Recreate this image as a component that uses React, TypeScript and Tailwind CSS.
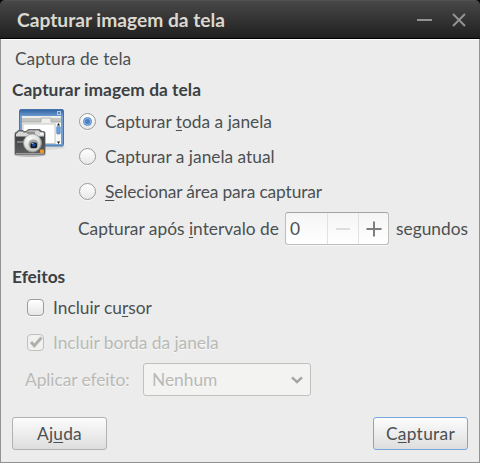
import type { ReactNode } from "react";

function ScreenshotIcon() {
  return (
    <svg width="52" height="50" viewBox="0 0 52 50" className="block">
      <defs>
        <linearGradient id="bar" x1="0" y1="0" x2="0" y2="1">
          <stop offset="0" stopColor="#3465a4" />
          <stop offset="1" stopColor="#6d99cf" />
        </linearGradient>
        <linearGradient id="body" x1="0" y1="0" x2="0" y2="1">
          <stop offset="0" stopColor="#77797a" />
          <stop offset="0.25" stopColor="#3c3e3f" />
          <stop offset="1" stopColor="#5d5f60" />
        </linearGradient>
        <radialGradient id="ring" cx="0.4" cy="0.35" r="0.7">
          <stop offset="0" stopColor="#ffffff" />
          <stop offset="0.65" stopColor="#dcddda" />
          <stop offset="1" stopColor="#9b9d99" />
        </radialGradient>
      </defs>
      <ellipse cx="30" cy="39" rx="22" ry="3" fill="#000" opacity="0.08" />
      <rect x="6.500" y="1.500" width="44" height="36.500" rx="1.500" fill="#729fcf" stroke="#4573ae" />
      <rect x="7" y="2" width="43" height="6" fill="url(#bar)" />
      <rect x="44" y="3" width="4" height="4" fill="#b3cbe7" />
      <path d="M45 4l2 2m0-2l-2 2" stroke="#3465a4" strokeWidth="0.700" />
      <rect x="9" y="8" width="39" height="28" fill="#eeeeec" />
      <path d="M9 10h19v4H9zM38 10h10v4H38z" fill="#c4c5c1" />
      <path d="M9 14h19v-4h10v4h10" fill="none" stroke="#a5a7a3" strokeWidth="0.800" />
      <rect x="10" y="16" width="32" height="19.500" fill="#fff" stroke="#babdb6" strokeWidth="0.800" />
      <rect x="43" y="15" width="5" height="21" fill="#f7f7f7" />
      <path d="M44 17.500l1.500-2.500 1.500 2.500zM44 33.500l1.500 2.500 1.500-2.500z" fill="#111" />
      <rect x="43.700" y="18.500" width="3.600" height="7.500" rx="0.800" fill="#6ba0dc" stroke="#4d82c0" strokeWidth="0.600" />
      <ellipse cx="17" cy="46.500" rx="16" ry="2.500" fill="#000" opacity="0.22" />
      <path d="M2 26q0-2 2-2l1-1.500h5l1 1h2l2-2h12l2 2h2q1 0 1 2v19q0 2-2 2H3.500Q2 46.500 2 45z" fill="url(#body)" stroke="#5a5c5d" strokeWidth="0.800" />
      <path d="M3 28.500v-2q0-1.500 1.500-1.500l1-1.500h4l1 1h3l2-2h10l2 2h2.500q1 0 1 1.500v2.500z" fill="#d6d7d4" />
      <rect x="14" y="23.500" width="8" height="2.500" fill="#8c8f8c" />
      <rect x="27" y="24.500" width="3.500" height="2.500" fill="#f4f4f2" />
      <path d="M4 34h7" stroke="#b7b9b5" />
      <circle cx="19.500" cy="35" r="9" fill="url(#ring)" stroke="#9b9d9a" strokeWidth="0.800" />
      <circle cx="20.500" cy="36.500" r="5.600" fill="#a4a6a3" stroke="#e9e9e7" />
      <rect x="17.500" y="34.500" width="6.500" height="5.500" rx="1.500" fill="#111820" />
      <rect x="19" y="35.500" width="3.500" height="3" rx="0.800" fill="#1e4e98" />
      <path d="M18.500 35.500h2" stroke="#7daae0" />
      <rect x="27" y="41.500" width="4" height="3.500" rx="0.800" fill="#f7941d" />
      <path d="M3 45.800h28" stroke="#c0c2bf" strokeWidth="0.900" />
    </svg>
  );
}

function Radio({ checked, children }: { checked?: boolean; children: ReactNode }) {
  return (
    <div className="flex h-[35px] items-center">
      <span className="mt-px mr-[9px] flex size-[17px] items-center justify-center rounded-full border border-[#989a98] bg-linear-to-b from-white to-[#e8e8e8] shadow-[0_1px_0_#fafafa]">
        {checked && (
          <span className="flex size-[9px] items-center justify-center rounded-full border border-[#5c8cc8] bg-[#8db5e3]">
            <span className="size-[5px] rounded-full bg-[#4b80c1]" />
          </span>
        )}
      </span>
      <span className="pt-[2px]">{children}</span>
    </div>
  );
}

function U({ children }: { children: ReactNode }) {
  return <span className="underline decoration-1 underline-offset-2 [text-decoration-skip-ink:none]">{children}</span>;
}

export default function App() {
  return (
    <div className="h-[463px] w-[480px] overflow-hidden bg-black font-[Lato,sans-serif] text-[17.33px] leading-[22px] whitespace-nowrap text-[#4b5052]">
      <header className="flex h-[39px] items-center rounded-t-[5px] border-t border-b border-t-[#525252] border-b-black bg-linear-to-b from-[#484848] to-[#202020] pl-[17px] text-[#dbd8d0]">
        <h1 className="text-[19.2px] font-bold">Capturar imagem da tela</h1>
        <svg width="53" height="16" viewBox="0 0 53 16" className="ml-auto mr-[11px]" stroke="#929292" strokeWidth="2" fill="none">
          <path d="M1 8h15M37 2l12 12M49 2l-12 12" />
        </svg>
      </header>
      <main className="flex h-[424px] flex-col border-x border-b border-x-[#929292] border-b-[#929292] bg-[#ececec] shadow-[inset_0_1px_0_#fff]">
        <div className="mt-[9px] pl-[14px]">Captura de tela</div>
        <h2 className="mt-[9px] pl-[11px] font-bold tracking-[0.05px] text-[#3a4043]">Capturar imagem da tela</h2>
        <div className="mt-[2px] flex">
          <div className="w-[78px] pt-[5px] pl-[12px]">
            <ScreenshotIcon />
          </div>
          <div>
            <Radio checked>
              Capturar <U>t</U>oda a janela
            </Radio>
            <Radio>Capturar a janela atual</Radio>
            <Radio>
              <span className="tracking-[-0.12px]">
                <U>S</U>elecionar área para capturar
              </span>
            </Radio>
          </div>
        </div>
        <div className="mt-[4px] flex h-[33px] items-center pl-[77px]">
          <span className="w-[207px]">
            Capturar após <U>i</U>ntervalo de
          </span>
          <div className="flex h-[33px] w-[104px] rounded-[3px] border border-[#bcbdbc] border-t-[#a3a4a3] bg-linear-to-b from-[#f5f5f5] to-white shadow-[0_1px_0_#f9f9f9]">
            <span className="flex w-[41px] items-center pl-[4px]">0</span>
            <span className="flex w-[31px] items-center justify-center border-l border-[#e2e2e2]">
              <span className="h-[2px] w-[14px] bg-[#dedede]" />
            </span>
            <span className="flex flex-1 items-center justify-center border-l border-[#e2e2e2]">
              <svg width="16" height="16" viewBox="0 0 16 16" stroke="#7b7d7c" strokeWidth="2">
                <path d="M8 .5v15M.5 8h15" />
              </svg>
            </span>
          </div>
          <span className="ml-[7px]">segundos</span>
        </div>
        <h2 className="mt-[21px] pl-[11px] font-bold text-[#3a4043]">Efeitos</h2>
        <div className="mt-[2px] flex h-[35px] items-center pl-[26px]">
          <span className="mr-[9px] size-[17px] rounded-[4px] border border-[#9b9d9a] bg-linear-to-b from-white to-[#e6e6e6] shadow-[0_1px_0_#fafafa]" />
          <span className="pt-px">
            Incluir cu<U>r</U>sor
          </span>
        </div>
        <div className="flex h-[35px] items-center pl-[26px] text-[#b7bab6] text-shadow-[0_1px_0_#f8f8f8]">
          <span className="mr-[9px] size-[17px] rounded-[4px] border border-[#bfc1bd] bg-[#f1f1f0]">
            <svg width="15" height="15" viewBox="0 0 15 15" fill="none" stroke="#aeb0a9" strokeWidth="3">
              <path d="M3 7l3.300 3.800L13.500 2.500" />
            </svg>
          </span>
          <span className="pt-px tracking-[-0.03px]">Incluir borda da janela</span>
        </div>
        <div className="mt-[3px] flex h-[33px] items-center pl-[24px] text-[#b7bab6] text-shadow-[0_1px_0_#f8f8f8]">
          <span className="w-[118px] pt-px tracking-[-0.06px]">Aplicar efeito:</span>
          <div className="flex h-[33px] w-[168px] items-center justify-between rounded-[3px] border border-[#bfc1be] bg-[#f3f3f2] pr-[7px] pl-[8px]">
            <span className="pt-px">Nenhum</span>
            <svg width="12" height="8" viewBox="0 0 12 8" fill="none" stroke="#a5a7a3" strokeWidth="2.500">
              <path d="M1 1.300l5 4.700 5-4.700" />
            </svg>
          </div>
        </div>
        <footer className="mt-auto mb-[12px] flex justify-between pr-[11px] pl-[11px]">
          <button className="h-[33px] w-[95px] rounded-[3px] border border-[#b0b1b0] bg-linear-to-b from-[#fcfcfc] to-[#dedede] pt-px tracking-[0.2px]">
            Aj<U>u</U>da
          </button>
          <button className="h-[33px] w-[95px] rounded-[3px] border border-[#78a7df] bg-linear-to-b from-[#fcfcfc] to-[#dedede] pt-px tracking-[0.3px]">
            C<U>a</U>pturar
          </button>
        </footer>
      </main>
    </div>
  );
}
